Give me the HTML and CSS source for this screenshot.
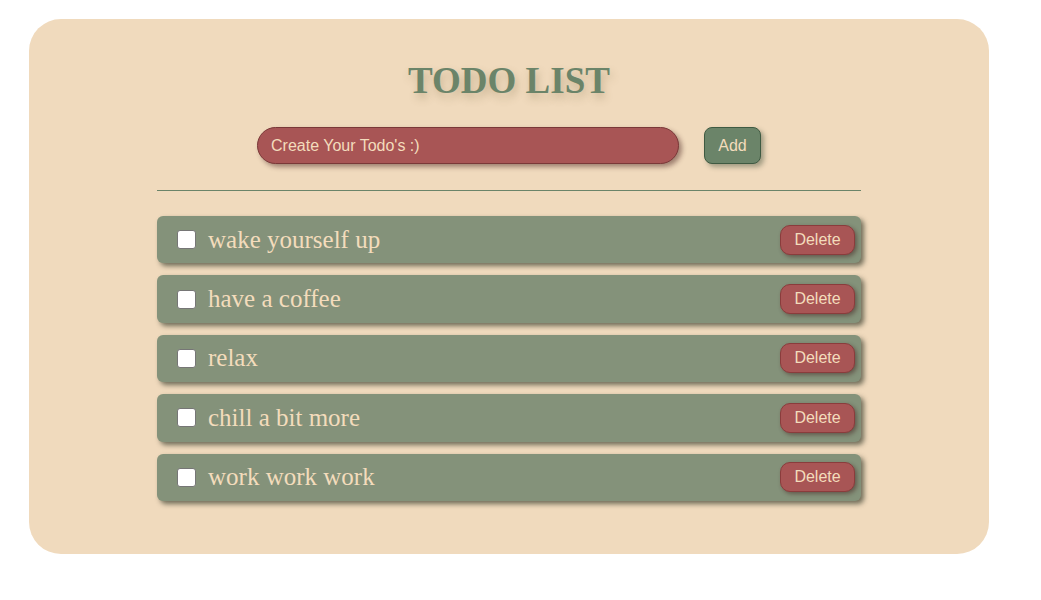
FILE: index.html
```html
<!DOCTYPE html>
<html lang="en">
<head>
<meta charset="utf-8">
<title>Todo List</title>
<link rel="stylesheet" href="styles.css">
</head>
<body>
<main class="app">
  <h1 class="title">TODO LIST</h1>
  <form class="add-row">
    <input class="todo-input" type="text" value="Create Your Todo's :)">
    <button class="add-btn" type="button">Add</button>
  </form>
  <hr class="divider">
  <ul class="todo-list">
    <li class="todo-item"><input class="check" type="checkbox"><span class="todo-text">wake yourself up</span><button class="del-btn" type="button">Delete</button></li>
    <li class="todo-item"><input class="check" type="checkbox"><span class="todo-text">have a coffee</span><button class="del-btn" type="button">Delete</button></li>
    <li class="todo-item"><input class="check" type="checkbox"><span class="todo-text">relax</span><button class="del-btn" type="button">Delete</button></li>
    <li class="todo-item"><input class="check" type="checkbox"><span class="todo-text">chill a bit more</span><button class="del-btn" type="button">Delete</button></li>
    <li class="todo-item"><input class="check" type="checkbox"><span class="todo-text">work work work</span><button class="del-btn" type="button">Delete</button></li>
  </ul>
</main>
</body>
</html>
```
FILE: styles.css
```css
* { box-sizing: border-box; }

html, body {
  margin: 0;
  padding: 0;
  background: #ffffff;
}

body {
  font-family: "Liberation Serif", "Times New Roman", serif;
}

.app {
  width: 960px;
  margin: 19px 0 0 29px;
  padding: 40px 128px 53px;
  background: #f0dabd;
  border-radius: 32px;
  display: flex;
  flex-direction: column;
}

.title {
  margin: 0;
  text-align: center;
  font-size: 37px;
  font-weight: bold;
  color: #6b8469;
  text-shadow: 2px 5px 8px rgba(110, 90, 50, 0.3);
}

.add-row {
  margin: 25px 0 0;
  display: flex;
  justify-content: center;
  gap: 25px;
}

.todo-input {
  width: 422px;
  height: 37px;
  padding: 0 13px;
  border: 1px solid #7a3838;
  border-radius: 19px;
  background: #a85555;
  color: #f3dcbc;
  font-family: "Liberation Sans", Arial, sans-serif;
  font-size: 16px;
  box-shadow: 3px 3px 5px rgba(60, 20, 20, 0.45);
  outline: none;
}

.add-btn {
  height: 37px;
  width: 57px;
  padding: 0;
  border: 1px solid #3f5a42;
  border-radius: 8px;
  background: #6b8469;
  color: #f3dcbc;
  font-family: "Liberation Sans", Arial, sans-serif;
  font-size: 16px;
  box-shadow: 3px 3px 5px rgba(40, 60, 40, 0.4);
}

.divider {
  margin: 26px 0 0;
  height: 1px;
  border: 0;
  background: #6b8469;
}

.todo-list {
  list-style: none;
  margin: 25px 0 0;
  padding: 0;
  display: flex;
  flex-direction: column;
  gap: 12px;
}

.todo-item {
  height: 47.4px;
  display: flex;
  align-items: center;
  padding: 0 6px 0 20px;
  background: #84927a;
  border-radius: 6px;
  box-shadow: 3px 3px 5px rgba(45, 50, 35, 0.65);
}

.check {
  appearance: none;
  -webkit-appearance: none;
  width: 19px;
  height: 19px;
  margin: 0;
  background: #ffffff;
  border: 1px solid #767676;
  border-radius: 3px;
  flex: none;
}

.todo-text {
  flex: 1;
  margin-left: 12px;
  font-size: 25px;
  color: #f3dcbc;
}

.del-btn {
  height: 30px;
  width: 75px;
  padding: 0;
  border: 1px solid #8a3c3c;
  border-radius: 10px;
  background: #a85555;
  color: #f3dcbc;
  font-family: "Liberation Sans", Arial, sans-serif;
  font-size: 16px;
  box-shadow: 2px 2px 4px rgba(60, 20, 20, 0.45);
}
```
